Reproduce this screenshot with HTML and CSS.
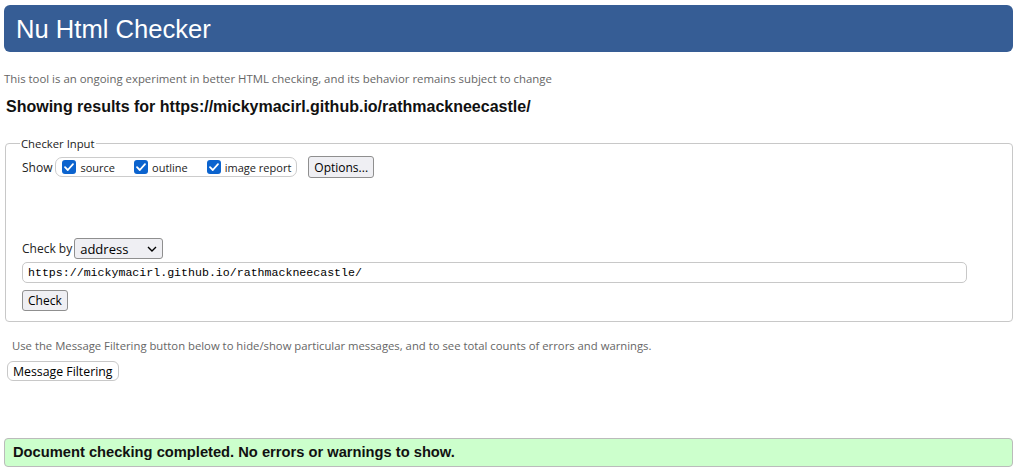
FILE: index.html
```html
<!DOCTYPE html>
<html>
<head>
<meta charset="utf-8">
<title>Nu Html Checker</title>
<link rel="stylesheet" href="styles.css">
</head>
<body>
<h1 class="banner">Nu Html Checker</h1>
<p class="intro">This tool is an ongoing experiment in better HTML checking, and its behavior remains subject to change</p>
<p class="results">Showing results for https://mickymacirl.github.io/rathmackneecastle/</p>
<fieldset class="checker">
  <legend class="legend">Checker Input</legend>
  <div class="show-row">
    <span class="label">Show</span>
    <div class="opts">
      <label class="opt"><span class="cb"><svg viewBox="0 0 14 14" width="14" height="14"><path d="M3 7.2 L5.8 10 L11 4.2" fill="none" stroke="#fff" stroke-width="1.8" stroke-linecap="round" stroke-linejoin="round"/></svg></span>source</label>
      <label class="opt"><span class="cb"><svg viewBox="0 0 14 14" width="14" height="14"><path d="M3 7.2 L5.8 10 L11 4.2" fill="none" stroke="#fff" stroke-width="1.8" stroke-linecap="round" stroke-linejoin="round"/></svg></span>outline</label>
      <label class="opt"><span class="cb"><svg viewBox="0 0 14 14" width="14" height="14"><path d="M3 7.2 L5.8 10 L11 4.2" fill="none" stroke="#fff" stroke-width="1.8" stroke-linecap="round" stroke-linejoin="round"/></svg></span>image report</label>
    </div>
    <span class="btn options">Options...</span>
  </div>
  <div class="checkby-row">
    <span class="label">Check by</span>
    <span class="select">address<svg viewBox="0 0 10 6" width="10" height="6"><path d="M1 1 L5 5 L9 1" fill="none" stroke="#000" stroke-width="1.4"/></svg></span>
  </div>
  <div class="url">https://mickymacirl.github.io/rathmackneecastle/</div>
  <span class="btn check">Check</span>
</fieldset>
<p class="filter-note">Use the Message Filtering button below to hide/show particular messages, and to see total counts of errors and warnings.</p>
<div class="btn filter">Message Filtering</div>
<div class="success">Document checking completed. No errors or warnings to show.</div>
</body>
</html>
```
FILE: styles.css
```css
html, body { margin: 0; padding: 0; background: #fff; }
body {
  padding: 5px 4px 0 4px;
  font-family: "Open Sans", "Noto Sans", sans-serif;
  font-size: 12px;
  color: #000;
}
.banner {
  margin: 0;
  height: 47px;
  background: #365d95;
  color: #fff;
  border-radius: 6px;
  font-family: "Liberation Sans", Arial, sans-serif;
  font-weight: normal;
  font-size: 25.6px;
  line-height: 48px;
  padding-left: 12px;
}
.intro {
  margin: 18px 0 0 0;
  color: #666;
  font-size: 11.4px;
  line-height: 18px;
}
.results {
  margin: 9px 0 0 2px;
  font-family: "Liberation Sans", Arial, sans-serif;
  font-weight: bold;
  font-size: 16px;
  line-height: 20px;
  color: #111;
}
.checker {
  margin: 19px 0 0 1px;
  border: 1px solid #c8c8c8;
  border-radius: 4px;
  padding: 5px 0 10px 16px;
}
.legend {
  padding: 0 1px;
  margin-left: -2px;
  font-size: 11.3px;
  color: #222;
}
.show-row {
  display: flex;
  align-items: center;
  height: 22px;
}
.label { color: #222; }
.opts {
  display: flex;
  align-items: center;
  margin-left: 3px;
  height: 18px;
  border: 1px solid #ccc;
  border-radius: 7px;
  padding: 0 5px 0 6px;
  gap: 19px;
  font-size: 11px;
}
.opt { display: flex; align-items: center; gap: 3px; color: #222; }
.cb {
  display: inline-flex;
  width: 14px; height: 14px;
  background: #0b63ce;
  border-radius: 3px;
  align-items: center;
  justify-content: center;
  margin-right: 1px;
}
.cb svg { width: 14px; height: 14px; }
.btn {
  display: inline-flex;
  align-items: center;
  box-sizing: border-box;
  border: 1px solid #8f8f8f;
  border-radius: 3px;
  background: #efeff3;
  font-size: 12px;
  color: #000;
  padding: 0 5px;
}
.options { margin-left: 11px; height: 22px; }
.checkby-row {
  display: flex;
  align-items: center;
  margin-top: 60px;
  height: 21px;
}
.select {
  display: inline-flex;
  align-items: center;
  justify-content: space-between;
  box-sizing: border-box;
  width: 89px;
  height: 21px;
  margin-left: 2px;
  border: 1px solid #8f8f8f;
  border-radius: 3px;
  background: #efeff3;
  padding: 0 5px;
  font-size: 13px;
}
.url {
  margin-top: 3px;
  width: 945px;
  height: 21px;
  box-sizing: border-box;
  border: 1px solid #c8c8c8;
  border-radius: 5px;
  font-family: "Liberation Mono", "DejaVu Sans Mono", monospace;
  font-size: 11.6px;
  line-height: 19px;
  padding-left: 5px;
}
.check { margin-top: 7px; height: 21px; padding: 0 5px; }
.filter-note {
  margin: 16px 0 0 8px;
  color: #666;
  font-size: 11.3px;
  line-height: 16px;
}
.filter {
  display: flex;
  width: fit-content;
  margin: 7px 0 0 3px;
  height: 20px;
  background: #fff;
  border-color: #c8c8c8;
  border-radius: 6px;
  padding: 0 5px;
  font-size: 12.3px;
}
.success {
  margin-top: 57px;
  height: 29px;
  box-sizing: border-box;
  background: #ccffcc;
  border: 1px solid #bbb;
  border-radius: 4px;
  font-family: "Liberation Sans", Arial, sans-serif;
  font-weight: bold;
  font-size: 14.7px;
  line-height: 27px;
  padding-left: 8px;
  color: #111;
}
```
